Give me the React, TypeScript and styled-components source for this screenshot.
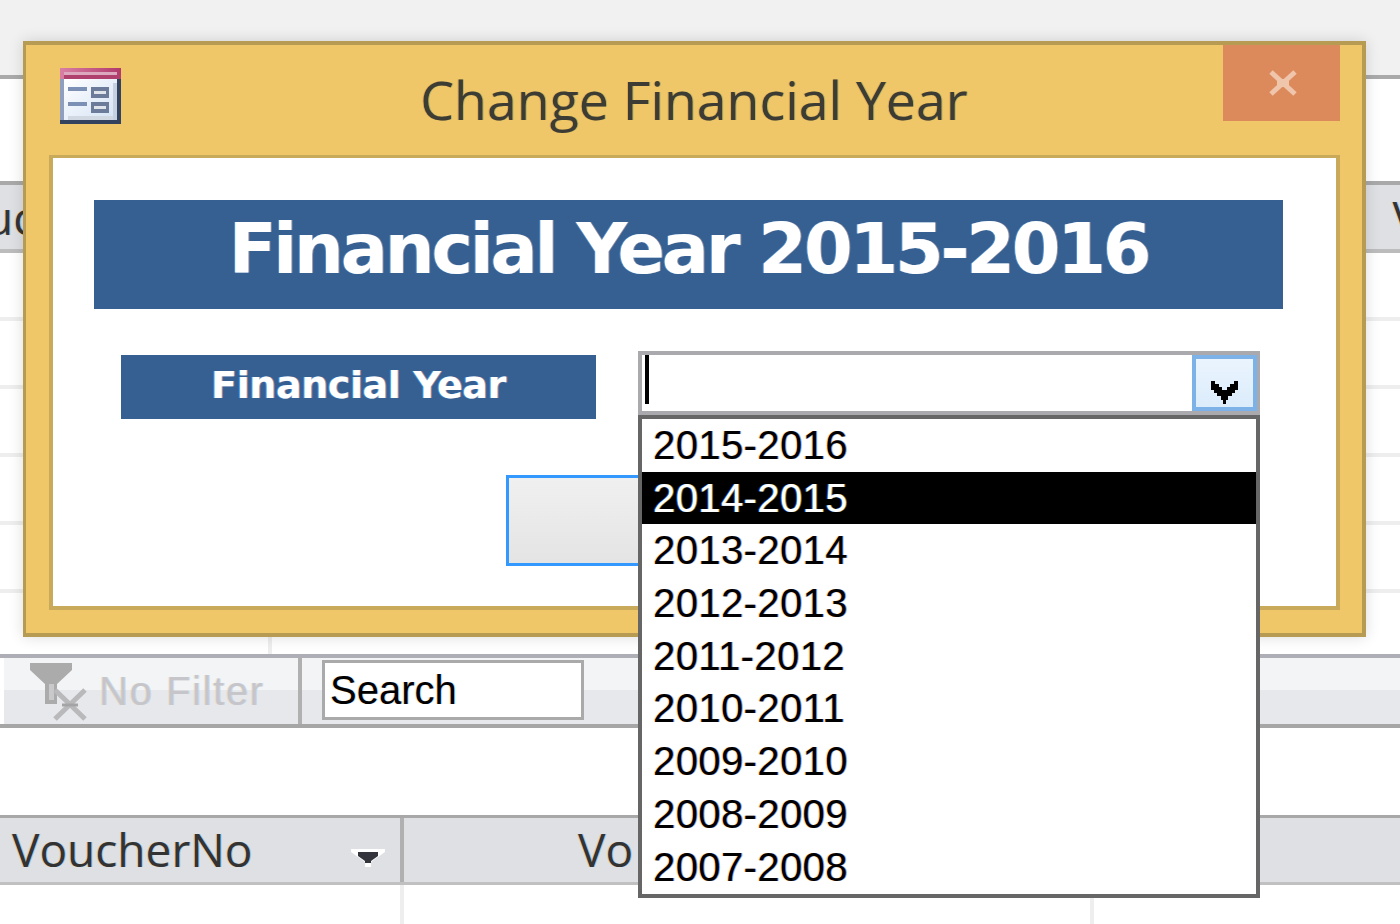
import React from "react";
import styled, { createGlobalStyle } from "styled-components";

const Global = createGlobalStyle`
  html, body { margin: 0; padding: 0; background: #fff; }
  * { box-sizing: border-box; }
`;

const fringe = "-1px 0 0 rgba(240,170,70,.35), 1px 0 0 rgba(60,160,240,.35)";
const Screen = styled.div`
  position: relative; width: 1400px; height: 924px; overflow: hidden; background: #fff;
  font-family: "Liberation Sans", sans-serif;
`;
const TopStrip = styled.div`height: 79px; background: #f1f1f1; border-bottom: 4px solid #aaaaaa;`;
const UpperGap = styled.div`height: 102px;`;
const UpperHeader = styled.div`
  height: 72px; background: #dee0e4; border-top: 4px solid #a9a9a9; border-bottom: 4px solid #bcbcbc;
  display: flex; justify-content: space-between; align-items: center; overflow: hidden;
  font: 46px "Open Sans", sans-serif; color: #333; text-shadow: ${fringe};
`;
const ClippedLeft = styled.span`margin-left: -70px;`;
const ClippedRight = styled.span`margin-right: -20px;`;
const GridRow = styled.div`height: 68px; border-bottom: 4px solid #eeeeee;`;
const LastRow = styled.div`height: 61px; margin-left: 268px; width: 4px; background: #eeeeee;`;
const Toolbar = styled.div`
  height: 74px; display: flex; align-items: stretch; gap: 0;
  border-top: 4px solid #aeaeb6; border-bottom: 4px solid #a6a6a6;
  background: linear-gradient(#f3f4f6 0 32px, #e7e8ec 32px);
`;
const FilterCell = styled.div`
  width: 302px; display: flex; align-items: center; gap: 12px;
  border-right: 4px solid #b0b0b0; border-left: 4px solid #fff;
  color: #c6c6ca; font-size: 40px; letter-spacing: 1.6px; padding-left: 26px;
`;
const FilterIcon = styled.svg`margin-top: 2px; flex: none; margin-right: 0;`;
const FilterLabel = styled.span`margin-left: -1px; text-shadow: -1px 0 0 rgba(240,200,130,.3), 1px 0 0 rgba(120,180,240,.3);`;
const SearchWrap = styled.div`padding: 2px 0 0 20px; display: flex;`;
const SearchBox = styled.div`
  width: 262px; height: 60px; background: #fff; border: 3px solid #aaaaaa; padding-left: 5px;
  font-size: 40px; line-height: 54px; color: #000; text-shadow: ${fringe};
`;
const LowerGap = styled.div`height: 87px;`;
const LowerHeader = styled.div`
  height: 70px; background: #dee0e4; border-top: 3px solid #a8a8a8; border-bottom: 3px solid #c0c0c0;
  display: grid; grid-template-columns: 404px 688px 1fr; font: 46px "Open Sans", sans-serif; color: #333;
  text-shadow: ${fringe}; 
`;
const Col = styled.div<{ $pad?: number }>`
  position: relative; padding-left: ${(p) => p.$pad ?? 12}px; border-right: 4px solid #b0b0b0; line-height: 62px; white-space: nowrap;
`;
const SortArrow = styled.svg`position: absolute; left: 351px; top: 31px;`;
const BottomCols = styled.div`
  height: 40px; display: grid; grid-template-columns: 404px 690px;
`;
const BottomCol = styled.div`border-right: 4px solid #eeeeee;`;

const Dialog = styled.div`
  position: absolute; left: 23px; top: 41px; width: 1343px; height: 596px;
  background: #efc768; border: 4px solid #b89b52; border-left-width: 3px;
  box-shadow: 0 0 14px rgba(0,0,0,.14);
  display: flex; flex-direction: column;
`;
const TitleBar = styled.div`
  height: 110px; position: relative; display: flex; align-items: flex-start; justify-content: center;
`;
const FormIcon = styled.svg`position: absolute; left: 34px; top: 23px;`;
const Title = styled.div`
  font: 53.6px/1 "Open Sans", sans-serif; color: #3c3c34; padding: 28px 0 0 0;
  text-shadow: -1px 0 0 rgba(210,110,30,.3), 1px 0 0 rgba(40,130,100,.3);
`;
const CloseBtn = styled.div`
  position: absolute; right: 22px; top: 0; width: 117px; height: 76px; background: #dc8a5c;
  display: flex; align-items: center; justify-content: center; padding-left: 2px;
`;
const Body = styled.div`
  margin: 0 22px 0 23px; height: 455px; background: #fff; border: 4px solid #c9a95a; border-top-width: 3px;
  padding: 42px 53px 0 41px; position: relative;
`;
const Banner = styled.div`
  height: 109px; background: #365f92; color: #fff; text-align: center;
  font: bold 70px/98px "DejaVu Sans", sans-serif; letter-spacing: -3.2px; text-shadow: -1px 0 0 rgba(90,180,250,.6), 1px 0 0 rgba(240,190,170,.5);
`;
const FieldRow = styled.div`
  margin: 46px 0 0 27px; width: 475px; height: 64px; background: #365f92; color: #fff; text-align: center;
  font: bold 38px/60px "DejaVu Sans", sans-serif; letter-spacing: -.4px; text-shadow: -1px 0 0 rgba(90,180,250,.6), 1px 0 0 rgba(240,190,170,.5);
`;
const OkButton = styled.div`
  margin: 56px 0 0 412px; width: 364px; height: 91px; border: 3px solid #3399ff;
  background: linear-gradient(#f0f0f0, #e4e4e4);
`;
const Combo = styled.div`
  position: absolute; left: 638px; top: 351px; width: 622px; height: 64px; background: #fff;
  border: 4px solid #a9a9ae; display: flex; justify-content: space-between;
`;
const Caret = styled.div`width: 4px; height: 49px; background: #000; margin-left: 3px;`;
const ArrowBtn = styled.div`
  width: 65px; height: 56px; border: 4px solid #7db2e8; background: linear-gradient(#eaf4fe, #dcecfb);
  display: flex; justify-content: center; padding-top: 22px; margin-right: -1px;
`;
const DropList = styled.div`
  position: absolute; left: 638px; top: 415px; width: 622px; height: 483px; background: #fff; border: 4px solid #666666;
`;
const Item = styled.div<{ $sel?: boolean }>`
  height: 52.7px; padding-left: 11px; font-size: 40px; line-height: 52px; color: ${(p) => (p.$sel ? "#fff" : "#000")};
  background: ${(p) => (p.$sel ? "#000" : "#fff")}; letter-spacing: .4px;
  text-shadow: ${(p) => (p.$sel ? "-1px 0 0 rgba(60,120,230,.7), 1px 0 0 rgba(170,190,90,.6)" : "-1px 0 0 rgba(250,170,60,.45), 1px 0 0 rgba(50,60,170,.45)")};
`;

const years = ["2015-2016","2014-2015","2013-2014","2012-2013","2011-2012","2010-2011","2009-2010","2008-2009","2007-2008"];

export default function App() {
  return (
    <Screen>
      <Global />
      <TopStrip />
      <UpperGap />
      <UpperHeader><ClippedLeft>Vouc</ClippedLeft><ClippedRight>V</ClippedRight></UpperHeader>
      <GridRow /><GridRow /><GridRow /><GridRow /><GridRow />
      <LastRow />
      <Toolbar>
        <FilterCell>
          <FilterIcon width="58" height="58" viewBox="0 0 58 58">
            <path d="M0 0H42V7L27 21V41H15V21L0 7Z" fill="#ababab" />
            <path d="M19 21V37H24V21Z" fill="#c9c9cc" />
            <path d="M25 27L55 56M55 27L25 56" stroke="#b9b9bb" strokeWidth="5" fill="none" />
            <path d="M32 42H48" stroke="#a4a4a6" strokeWidth="3" />
          </FilterIcon>
          <FilterLabel>No Filter</FilterLabel>
        </FilterCell>
        <SearchWrap><SearchBox>Search</SearchBox></SearchWrap>
      </Toolbar>
      <LowerGap />
      <LowerHeader>
        <Col>VoucherNo
          <SortArrow width="34" height="18" viewBox="0 0 34 18">
            <path d="M0 0H34V3L20 13V18H14V13L0 3Z" fill="#fff" />
            <path d="M7 3H27V7L20 12V14H14V12L7 7Z" fill="#34343c" />
          </SortArrow>
        </Col>
        <Col $pad={174}>Vo</Col>
        <div />
      </LowerHeader>
      <BottomCols><BottomCol /><BottomCol /></BottomCols>

      <Dialog>
        <TitleBar>
          <FormIcon width="61" height="56" viewBox="0 0 61 56">
            <defs>
              <linearGradient id="pk" x1="0" x2="1"><stop offset="0" stopColor="#d97fa4" /><stop offset="1" stopColor="#b03a6c" /></linearGradient>
              <linearGradient id="bd" x1="0" x2="1" y1="0" y2="1"><stop offset="0" stopColor="#ffffff" /><stop offset="1" stopColor="#d4e2f4" /></linearGradient>
            </defs>
            <rect width="61" height="56" fill="#33425f" />
            <rect width="57" height="52" fill="#8f9fbd" />
            <rect x="4" y="11" width="53" height="41" fill="url(#bd)" />
            <rect x="8" y="48" width="49" height="4" fill="#d2d8e2" />
            <rect x="53" y="15" width="4" height="37" fill="#c5d1e0" />
            <rect width="61" height="11" fill="url(#pk)" />
            <rect x="4" y="4" width="53" height="3" fill="#dca8bd" />
            <rect x="4" y="7" width="57" height="4" fill="#b0416f" />
            <rect x="8" y="19" width="19" height="4" fill="#7c8fb5" />
            <rect x="8" y="34" width="19" height="4" fill="#7c8fb5" />
            <rect x="31" y="19" width="18" height="11" fill="#6d7b9b" />
            <rect x="34" y="23" width="12" height="3" fill="#dfe3ea" />
            <rect x="31" y="34" width="18" height="11" fill="#6d7b9b" />
            <rect x="34" y="38" width="12" height="3" fill="#dfe3ea" />
          </FormIcon>
          <Title>Change Financial Year</Title>
          <CloseBtn>
            <svg width="30" height="26" viewBox="0 0 30 26">
              <path d="M3 2L27 24M27 2L3 24" stroke="#efc5ac" strokeWidth="5" fill="none" />
              <rect x="9" y="9" width="12" height="8" fill="#efc5ac" />
            </svg>
          </CloseBtn>
        </TitleBar>
        <Body>
          <Banner>Financial Year 2015-2016</Banner>
          <FieldRow>Financial Year</FieldRow>
          <OkButton />
        </Body>
      </Dialog>

      <Combo>
        <Caret />
        <ArrowBtn>
          <svg width="27" height="24" viewBox="0 0 27 24">
            <path d="M0 0H4V3H8V6H11V9H16V6H19V3H23V0H27V9H24V12H21V15H17V19H15V23H12V19H10V15H6V12H3V9H0Z" fill="#000" />
          </svg>
        </ArrowBtn>
      </Combo>
      <DropList>
        {years.map((y, i) => <Item key={y} $sel={i === 1}>{y}</Item>)}
      </DropList>
    </Screen>
  );
}
